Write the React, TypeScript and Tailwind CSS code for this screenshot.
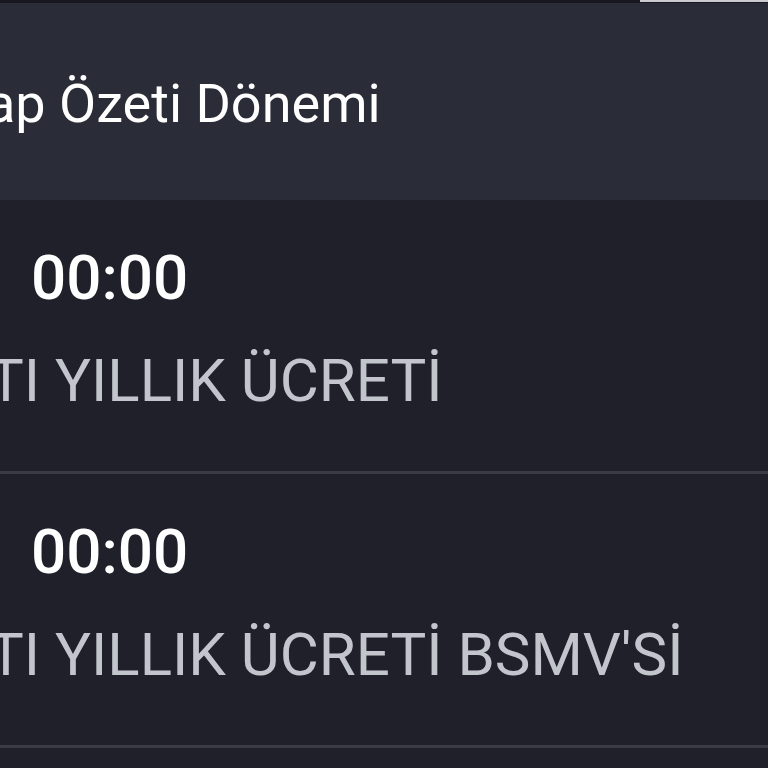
import React from 'react';

const rows = [
  { time: '00:00', label: 'TI YILLIK ÜCRETİ' },
  { time: '00:00', label: "TI YILLIK ÜCRETİ BSMV'Sİ" },
];

export default function App() {
  return (
    <div className="w-[768px] h-[768px] overflow-hidden bg-[#1f2029] flex flex-col" style={{ fontFamily: 'Roboto, "Noto Sans", sans-serif' }}>
      {/* status strip */}
      <div className="h-[3px] flex shrink-0 bg-[#16171f]">
        <div className="flex-1" />
        <div className="w-[128px] h-[2px] bg-[#c9cbd1]" />
      </div>

      <div className="bg-[#2a2c37] pt-[74px] pb-[69px] shrink-0 overflow-hidden">
        <div className="text-[54px] leading-[54px] text-white whitespace-nowrap -ml-[14px]">ap Özeti Dönemi</div>
      </div>

      {rows.map((r, i) => (
        <div key={i} className="shrink-0">
          <div className="h-[271px] pt-[47px] overflow-hidden">
            <div className="pl-[31px] text-[62px] leading-[62px] font-medium text-white">{r.time}</div>
            <div className="mt-[42px] -ml-[12px] text-[60px] leading-[60px] text-[#c3c5cc] whitespace-nowrap">{r.label}</div>
          </div>
          <div className="h-[3px] bg-[#393b47]" />
        </div>
      ))}
    </div>
  );
}
